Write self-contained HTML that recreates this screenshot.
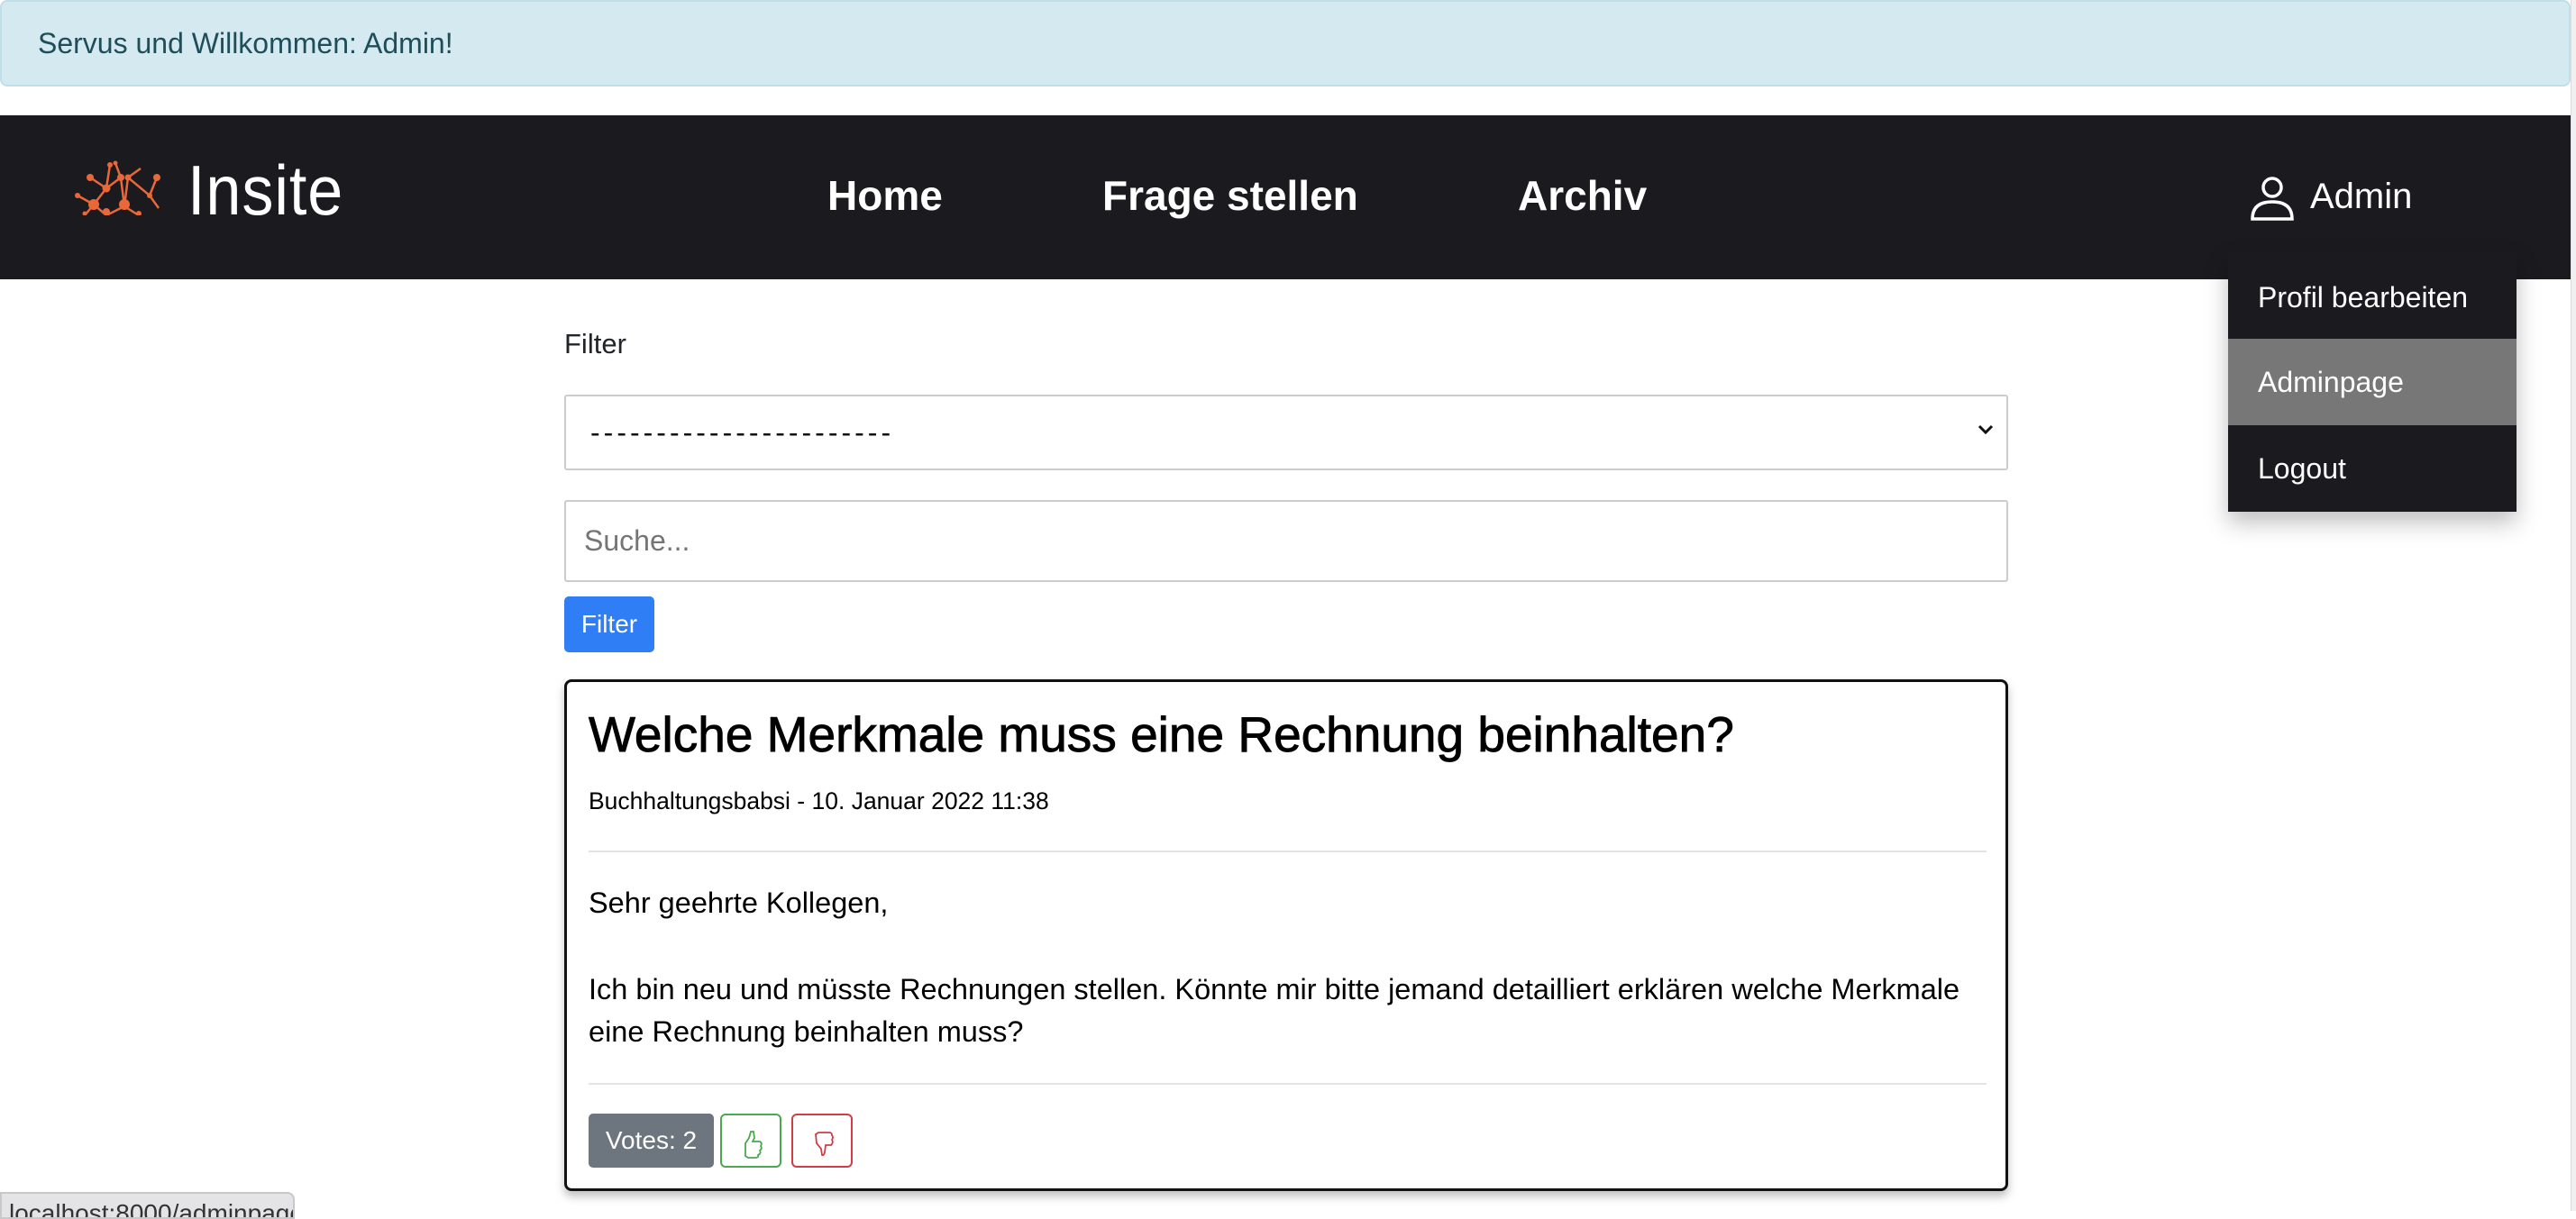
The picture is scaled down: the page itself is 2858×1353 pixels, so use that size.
<!DOCTYPE html>
<html><head><meta charset="utf-8">
<style>
*{box-sizing:border-box;margin:0;padding:0}
html,body{width:2858px;height:1344px;overflow:hidden;background:#fff;font-family:"Liberation Sans",sans-serif;color:#212529}
.alert{position:absolute;left:0;top:0;width:2852px;height:96px;background:#d4eaf0;border:2px solid #bfe0e8;border-radius:8px;color:#1f4e5a;font-size:32px;padding-left:40px;line-height:92px}
.nav{position:absolute;left:0;top:128px;width:2852px;height:182px;background:#1b1a1f}
.logo{position:absolute;left:82px;top:49px}
.brand{position:absolute;left:208px;top:38px;color:#fff;font-size:78px;font-family:"Liberation Sans",sans-serif;letter-spacing:1px;transform:scaleX(.9);transform-origin:left}
.nl{position:absolute;top:62px;color:#fff;font-weight:bold;font-size:46px}
.admin{position:absolute;left:2563px;top:68px;color:#fff;font-size:40px}
.dd{position:absolute;left:2472px;top:280px;width:320px;height:288px;background:#1b1a1f;box-shadow:0 12px 24px rgba(0,0,0,.25)}
.dd div{position:absolute;left:0;width:320px;height:96px;color:#fff;font-size:32px;padding-left:33px;line-height:96px}
.lbl{position:absolute;left:626px;top:364px;font-size:31px}
.sel{position:absolute;left:626px;top:438px;width:1602px;height:84px;border:2px solid #ccc;border-radius:3px;font-size:32px;padding-left:27px;line-height:80px;color:#111;letter-spacing:4px}
.inp{position:absolute;left:626px;top:555px;width:1602px;height:91px;border:2px solid #ccc;border-radius:3px;font-size:32px;padding-left:20px;line-height:87px;color:#757575}
.btn{position:absolute;left:626px;top:662px;width:100px;height:62px;background:#2f7ef6;border-radius:5px;color:#fff;font-size:28px;text-align:center;line-height:62px}
.card{position:absolute;left:626px;top:754px;width:1602px;height:568px;border:3px solid #111;border-radius:8px;box-shadow:0 6px 10px rgba(0,0,0,.25)}
.t{position:absolute;left:24px;top:26px;font-size:55px;color:#000;white-space:nowrap;-webkit-text-stroke:0.9px #000}
.meta{position:absolute;left:24px;top:117px;font-size:26.5px;color:#000;white-space:nowrap}
.hr{position:absolute;left:24px;width:1551px;height:2px;background:#e3e3e3}
.p{position:absolute;left:24px;font-size:32.5px;color:#000;line-height:47px;white-space:nowrap}
.votes{position:absolute;left:24px;top:479px;width:139px;height:60px;background:#6d757e;border-radius:5px;color:#fff;font-size:28px;text-align:center;line-height:60px}
.vb{position:absolute;top:479px;width:68px;height:60px;border:2px solid;border-radius:6px}
.vb svg{position:absolute;left:10px;top:1px}
.status{position:absolute;left:0;top:1323px;width:327px;height:30px;background:#e4e4e6;border:2px solid #c8c8ca;border-radius:0 8px 0 0;font-size:28px;color:#333;padding-left:8px;line-height:44px;overflow:hidden}
.sb{position:absolute;left:2852px;top:0;width:6px;height:1344px;background:#f0f0f0;border-left:1px solid #ddd}
</style></head><body>
<div class="alert">Servus und Willkommen: Admin!</div>
<div class="nav">
<svg class="logo" width="102" height="62" viewBox="0 0 102 62" fill="none" stroke="#e8683a" stroke-width="2.5">
<path d="M4 40 L22 50 L36 32 L40 6 M36 32 L52 20 L46 4 M22 50 L36 62 L56 52 M52 20 L56 52 L72 62 M56 52 L60 20 L84 40 L92 20 M84 40 L94 54 M22 50 L12 62 M36 32 L18 20 M60 20 L74 10"/>
<g fill="#e8683a" stroke="none"><circle cx="4" cy="40" r="3"/><circle cx="22" cy="50" r="6"/><circle cx="36" cy="32" r="4.5"/><circle cx="40" cy="6" r="3"/><circle cx="52" cy="20" r="4"/><circle cx="46" cy="4" r="2.5"/><circle cx="36" cy="58" r="4"/><circle cx="56" cy="50" r="6"/><circle cx="60" cy="20" r="3.5"/><circle cx="84" cy="40" r="3"/><circle cx="92" cy="20" r="4"/><circle cx="72" cy="60" r="3"/><circle cx="18" cy="20" r="4"/><circle cx="12" cy="60" r="2.5"/></g>
</svg>
<div class="brand">Insite</div>
<div class="nl" style="left:918px">Home</div>
<div class="nl" style="left:1223px">Frage stellen</div>
<div class="nl" style="left:1684px">Archiv</div>
<svg style="position:absolute;left:2497px;top:67px" width="48" height="50" viewBox="0 0 48 50" fill="none" stroke="#fff" stroke-width="3.5"><circle cx="24" cy="13" r="10"/><path d="M2 48 Q2 29 24 29 Q46 29 46 48 Z"/></svg>
<div class="admin">Admin</div>
</div>
<div class="dd">
<div style="top:0;line-height:100px">Profil bearbeiten</div>
<div style="top:96px;background:#777">Adminpage</div>
<div style="top:192px">Logout</div>
</div>
<div class="lbl">Filter</div>
<div class="sel">-----------------------<svg style="position:absolute;right:14px;top:30px" width="18" height="14" viewBox="0 0 18 14"><path d="M2 3 L9 10 L16 3" stroke="#111" stroke-width="3" fill="none"/></svg></div>
<div class="inp">Suche...</div>
<div class="btn">Filter</div>
<div class="card">
<div class="t">Welche Merkmale muss eine Rechnung beinhalten?</div>
<div class="meta">Buchhaltungsbabsi - 10. Januar 2022 11:38</div>
<div class="hr" style="top:187px"></div>
<div class="p" style="top:222px">Sehr geehrte Kollegen,</div>
<div class="p" style="top:318px">Ich bin neu und müsste Rechnungen stellen. Könnte mir bitte jemand detailliert erklären welche Merkmale<br>eine Rechnung beinhalten muss?</div>
<div class="hr" style="top:445px"></div>
<div class="votes">Votes: 2</div>
<div class="vb" style="left:170px;border-color:#4aa84f"><svg width="47" height="58" viewBox="0 0 47 58"><path d="M16 44 L16 30 L20 24 L22 17 L25 17 L26 24 L24 28 L32 28 Q35 30 33 33 Q35 36 32 38 Q34 41 30 43 Q31 46 27 46 L19 46 Z" fill="none" stroke="#4aa84f" stroke-width="1.8"/></svg></div>
<div class="vb" style="left:249px;border-color:#d33c44"><svg width="47" height="58" viewBox="0 0 47 58"><path d="M18 18 L30 18 Q33 18 33 21 Q35 23 33 26 Q35 29 32 32 L26 32 L25 40 Q24 44 22 43 L21 36 L16 30 L15 20 Z" fill="none" stroke="#d33c44" stroke-width="1.8"/></svg></div>
</div>
<div class="status">localhost:8000/adminpage</div>
<div class="sb"></div>
</body></html>
